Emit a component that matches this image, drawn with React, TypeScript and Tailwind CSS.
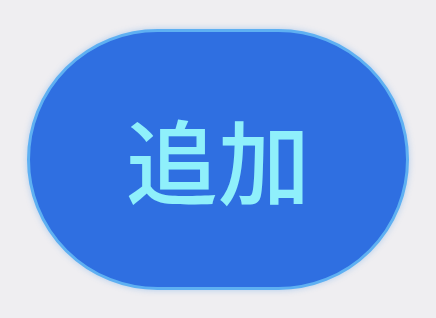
export default function App() {
  return (
    <div className="flex h-[318px] w-[436px] items-center justify-center bg-[#efeef1]">
      <button
        className="flex h-[261px] w-[382px] items-center justify-center rounded-full border-[3px] border-[#5eb0f2] bg-[#2f6fe1] shadow-[0_0_6px_rgba(60,140,230,0.35)]"
        style={{ fontFamily: '"Noto Sans CJK JP", "Noto Sans", sans-serif' }}
      >
        <span className="pb-[2px] text-[92px] font-medium leading-none text-[#8ff0fb]">追加</span>
      </button>
    </div>
  )
}
